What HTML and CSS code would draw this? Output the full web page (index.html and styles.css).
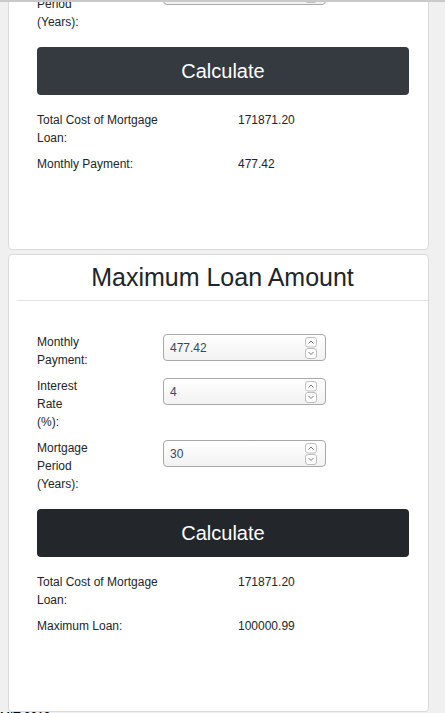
FILE: index.html
```html
<!DOCTYPE html>
<html lang="en">
<head>
<meta charset="utf-8">
<title>Mortgage Calculator</title>
<link rel="stylesheet" href="styles.css">
</head>
<body>
<div class="clip">
  <div class="page">
    <div class="card card-first">
      <div class="card-body">
        <div class="form-row">
          <label class="label">Mortgage<br>Period<br>(Years):</label>
          <div class="field">
            <input class="field-input" type="text" value="30">
            <svg class="spin" width="12" height="22" viewBox="0 0 12 22"><rect x="0.5" y="0.5" width="11" height="9.5" rx="2.5" fill="#fff" stroke="#bdbdbd"/><path d="M3.5 6.5 L6 4 L8.5 6.5" fill="none" stroke="#777" stroke-width="1"/><rect x="0.5" y="11.5" width="11" height="10" rx="2.5" fill="#fff" stroke="#bdbdbd"/><path d="M3.5 15 L6 17.5 L8.5 15" fill="none" stroke="#777" stroke-width="1"/></svg>
          </div>
        </div>
        <button class="btn btn-a" type="button">Calculate</button>
        <div class="results">
          <div class="result-row"><span class="res-label">Total Cost of Mortgage<br>Loan:</span><span class="res-value">171871.20</span></div>
          <div class="result-row"><span class="res-label">Monthly Payment:</span><span class="res-value">477.42</span></div>
        </div>
      </div>
    </div>

    <div class="card card-second">
      <div class="card-header"><h3 class="title">Maximum Loan Amount</h3></div>
      <div class="card-body body-second">
        <div class="form-row">
          <label class="label">Monthly<br>Payment:</label>
          <div class="field">
            <input class="field-input" type="text" value="477.42">
            <svg class="spin" width="12" height="22" viewBox="0 0 12 22"><rect x="0.5" y="0.5" width="11" height="9.5" rx="2.5" fill="#fff" stroke="#bdbdbd"/><path d="M3.5 6.5 L6 4 L8.5 6.5" fill="none" stroke="#777" stroke-width="1"/><rect x="0.5" y="11.5" width="11" height="10" rx="2.5" fill="#fff" stroke="#bdbdbd"/><path d="M3.5 15 L6 17.5 L8.5 15" fill="none" stroke="#777" stroke-width="1"/></svg>
          </div>
        </div>
        <div class="form-row">
          <label class="label">Interest<br>Rate<br>(%):</label>
          <div class="field">
            <input class="field-input" type="text" value="4">
            <svg class="spin" width="12" height="22" viewBox="0 0 12 22"><rect x="0.5" y="0.5" width="11" height="9.5" rx="2.5" fill="#fff" stroke="#bdbdbd"/><path d="M3.5 6.5 L6 4 L8.5 6.5" fill="none" stroke="#777" stroke-width="1"/><rect x="0.5" y="11.5" width="11" height="10" rx="2.5" fill="#fff" stroke="#bdbdbd"/><path d="M3.5 15 L6 17.5 L8.5 15" fill="none" stroke="#777" stroke-width="1"/></svg>
          </div>
        </div>
        <div class="form-row">
          <label class="label">Mortgage<br>Period<br>(Years):</label>
          <div class="field">
            <input class="field-input" type="text" value="30">
            <svg class="spin" width="12" height="22" viewBox="0 0 12 22"><rect x="0.5" y="0.5" width="11" height="9.5" rx="2.5" fill="#fff" stroke="#bdbdbd"/><path d="M3.5 6.5 L6 4 L8.5 6.5" fill="none" stroke="#777" stroke-width="1"/><rect x="0.5" y="11.5" width="11" height="10" rx="2.5" fill="#fff" stroke="#bdbdbd"/><path d="M3.5 15 L6 17.5 L8.5 15" fill="none" stroke="#777" stroke-width="1"/></svg>
          </div>
        </div>
        <button class="btn btn-b" type="button">Calculate</button>
        <div class="results">
          <div class="result-row"><span class="res-label">Total Cost of Mortgage<br>Loan:</span><span class="res-value">171871.20</span></div>
          <div class="result-row"><span class="res-label">Maximum Loan:</span><span class="res-value">100000.99</span></div>
        </div>
      </div>
    </div>
  </div>
  <div class="footer">MIT 2019</div>
</div>
</body>
</html>
```

FILE: styles.css
```css
* { box-sizing: border-box; }

html, body {
  margin: 0;
  padding: 0;
  background: #f0f0f0;
  font-family: "Liberation Sans", Arial, Helvetica, sans-serif;
  color: #212529;
}

.clip {
  border-top: 2px solid #c9c9c9;
  overflow: hidden;
  height: 713px;
}

.page {
  padding-left: 8px;
  display: flex;
  flex-direction: column;
}

.card {
  width: 421px;
  background: #fff;
  border: 1px solid #dadada;
  border-radius: 4px;
}

.card-first {
  margin-top: -26px;
}

.card-second {
  margin-top: 4px;
}

.card-header {
  margin-left: 8px;
  padding: 7px 0 8px;
  border-bottom: 1px solid #e2e2e2;
}

.title {
  margin: 0;
  text-align: center;
  font-size: 25px;
  line-height: 30px;
  font-weight: 400;
  color: #212529;
}

.card-body {
  padding: 0 19px 76px 28px;
  display: flex;
  flex-direction: column;
}

.body-second {
  padding-top: 32px;
}

.form-row {
  display: flex;
  align-items: flex-start;
  margin-bottom: 8px;
}

.label {
  width: 126px;
  font-size: 12px;
  line-height: 18px;
  color: #212529;
}

.field {
  width: 163px;
  height: 27px;
  margin-top: 1px;
  border: 1px solid #a8a8a8;
  border-radius: 4px;
  background: linear-gradient(#ffffff, #f2f2f2);
  display: flex;
  align-items: center;
  padding: 0 8px 0 6px;
}

.field-input {
  flex: 1;
  min-width: 0;
  border: none;
  background: transparent;
  padding: 0;
  margin: 0;
  font-family: inherit;
  font-size: 12px;
  color: #34495e;
  outline: none;
}

.spin {
  display: block;
  flex: none;
}

.btn {
  margin-top: 8px;
  height: 48px;
  width: 372px;
  border: none;
  border-radius: 4px;
  color: #fff;
  font-family: inherit;
  font-size: 20px;
  line-height: 30px;
  padding: 0;
}

.btn-a { background: #343a40; }
.btn-b { background: #23272b; }

.results {
  margin-top: 16px;
  display: flex;
  flex-direction: column;
  gap: 8px;
}

.result-row {
  display: flex;
  font-size: 12px;
  line-height: 18px;
}

.res-label {
  width: 201px;
  color: #212529;
}

.res-value {
  color: #212529;
}

.footer {
  margin-top: -2px;
  font-size: 12px;
  line-height: 14px;
  color: #000;
}
```
